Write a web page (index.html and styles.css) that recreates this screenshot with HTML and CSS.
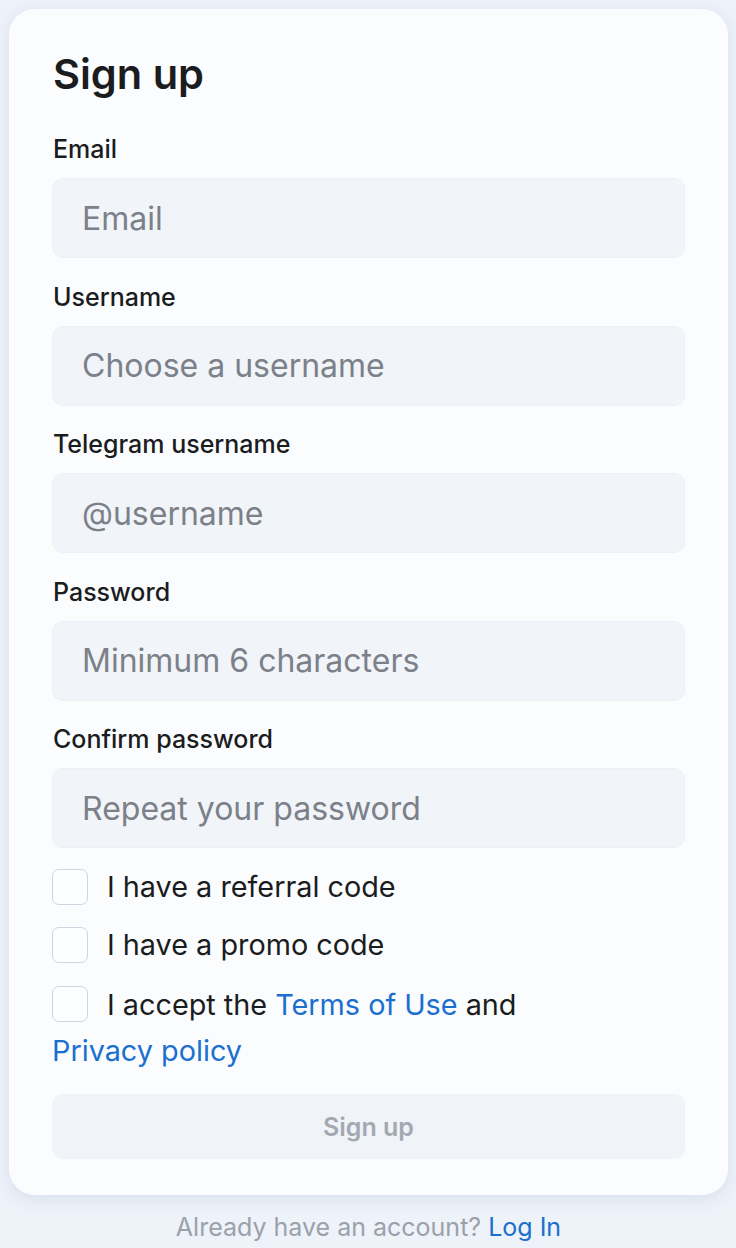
FILE: index.html
```html
<!DOCTYPE html>
<html lang="en">
<head>
<meta charset="utf-8">
<title>Sign up</title>
<link rel="stylesheet" href="styles.css">
</head>
<body>
<main class="page">
  <form class="card">
    <h1 class="title">Sign up</h1>
    <div class="field">
      <label class="label">Email</label>
      <input class="input" type="text" placeholder="Email">
    </div>
    <div class="field">
      <label class="label">Username</label>
      <input class="input" type="text" placeholder="Choose a username">
    </div>
    <div class="field">
      <label class="label">Telegram username</label>
      <input class="input" type="text" placeholder="@username">
    </div>
    <div class="field">
      <label class="label">Password</label>
      <input class="input" type="text" placeholder="Minimum 6 characters">
    </div>
    <div class="field">
      <label class="label">Confirm password</label>
      <input class="input" type="text" placeholder="Repeat your password">
    </div>
    <div class="checks">
      <div class="check"><span class="box"></span><span>I have a referral code</span></div>
      <div class="check"><span class="box"></span><span>I have a promo code</span></div>
      <p class="check terms"><span class="box"></span>I accept the <a class="link nowrap" href="#">Terms of Use</a> and <a class="link nowrap" href="#">Privacy policy</a></p>
    </div>
    <button class="submit" type="button">Sign up</button>
  </form>
  <p class="footer">Already have an account? <a class="link" href="#">Log In</a></p>
</main>
</body>
</html>
```
FILE: styles.css
```css
html, body {
  margin: 0;
  padding: 0;
  background: #eef2f9;
}
body {
  font-family: Inter, "Noto Sans", sans-serif;
  color: #1b1c20;
}
.page {
  padding: 9px 8px 0 9px;
}
.card {
  background: #fafcfe;
  border-radius: 26px;
  padding: 41px 43px 36px 43px;
  box-shadow: 0 4px 16px rgba(150, 170, 210, 0.25);
  display: flex;
  flex-direction: column;
}
.title {
  margin: 0 0 37px 1px;
  font-size: 41.5px;
  line-height: 48px;
  font-weight: 600;
}
.field {
  display: flex;
  flex-direction: column;
  margin-bottom: 24.5px;
}
.field:nth-child(6) {
  margin-bottom: 16px;
}
.label {
  font-size: 25px;
  line-height: 28px;
  font-weight: 500;
  margin: 0 0 15px 1px;
}
.input {
  box-sizing: border-box;
  height: 80px;
  border: 1px solid #edf0f5;
  border-radius: 11px;
  background: #f1f4f8;
  padding: 0 29px;
  font-family: inherit;
  font-size: 32px;
  color: #1b1c20;
  outline: none;
}
.input::placeholder {
  color: #7b8089;
}
.checks {
  display: flex;
  flex-direction: column;
  gap: 12px;
}
.check {
  margin: 0;
  display: flex;
  align-items: center;
  font-size: 28.8px;
  line-height: 46px;
}
.terms {
  display: block;
  margin-top: 2px;
}
.box {
  box-sizing: border-box;
  width: 36px;
  height: 36px;
  border: 1px solid #cfd5df;
  border-radius: 7px;
  background: #fdfeff;
  margin-right: 19px;
  flex: none;
}
.terms .box {
  display: inline-block;
  vertical-align: -7px;
}
.link {
  color: #1a6fcf;
  text-decoration: none;
}
.nowrap {
  white-space: nowrap;
}
.submit {
  margin-top: 20px;
  height: 65px;
  border: none;
  border-radius: 11px;
  background: #f0f3f7;
  color: #a3a9b2;
  font-family: inherit;
  font-size: 25px;
  font-weight: 600;
}
.footer {
  margin: 17px 0 0;
  text-align: center;
  font-size: 25px;
  line-height: 30px;
  color: #9ba1ab;
}
```
